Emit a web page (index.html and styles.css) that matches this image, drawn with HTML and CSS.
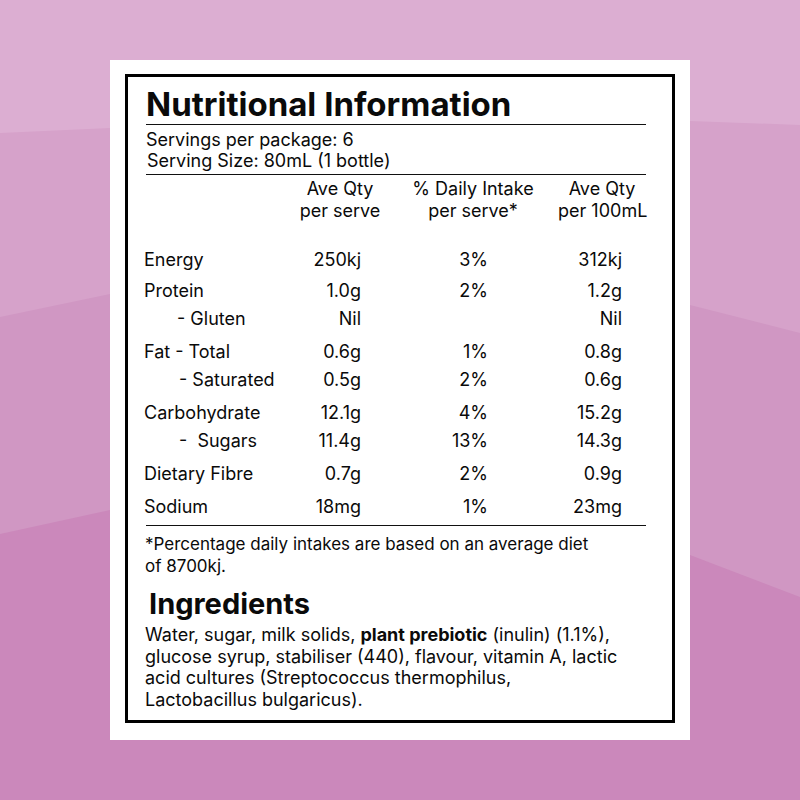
FILE: index.html
```html
<!DOCTYPE html>
<html lang="en">
<head>
<meta charset="utf-8">
<title>Nutritional Information</title>
<link rel="stylesheet" href="styles.css">
</head>
<body>
<div class="page">
  <div class="card">
    <div class="panel">
      <h1 class="title">Nutritional Information</h1>
      <div class="servings">
        <div>Servings per package: 6</div>
        <div class="size">Serving Size: 80mL (1 bottle)</div>
      </div>
      <div class="table">
        <div class="row head">
          <div class="label"></div>
          <div class="hc">Ave Qty<br>per serve</div>
          <div class="hc">% Daily Intake<br>per serve*</div>
          <div class="hc">Ave Qty<br>per 100mL</div>
        </div>
        <div class="row first">
          <div class="label">Energy</div>
          <div class="v1">250kj</div>
          <div class="v2">3%</div>
          <div class="v3">312kj</div>
        </div>
        <div class="row tight">
          <div class="label">Protein</div>
          <div class="v1">1.0g</div>
          <div class="v2">2%</div>
          <div class="v3">1.2g</div>
        </div>
        <div class="row">
          <div class="label sub">- Gluten</div>
          <div class="v1">Nil</div>
          <div class="v2"></div>
          <div class="v3">Nil</div>
        </div>
        <div class="row group">
          <div class="label">Fat - Total</div>
          <div class="v1">0.6g</div>
          <div class="v2">1%</div>
          <div class="v3">0.8g</div>
        </div>
        <div class="row">
          <div class="label sub sat">- Saturated</div>
          <div class="v1">0.5g</div>
          <div class="v2">2%</div>
          <div class="v3">0.6g</div>
        </div>
        <div class="row group">
          <div class="label">Carbohydrate</div>
          <div class="v1">12.1g</div>
          <div class="v2">4%</div>
          <div class="v3">15.2g</div>
        </div>
        <div class="row">
          <div class="label sub sat">-&nbsp; Sugars</div>
          <div class="v1">11.4g</div>
          <div class="v2">13%</div>
          <div class="v3">14.3g</div>
        </div>
        <div class="row group">
          <div class="label">Dietary Fibre</div>
          <div class="v1">0.7g</div>
          <div class="v2">2%</div>
          <div class="v3">0.9g</div>
        </div>
        <div class="row group last">
          <div class="label">Sodium</div>
          <div class="v1">18mg</div>
          <div class="v2">1%</div>
          <div class="v3">23mg</div>
        </div>
      </div>
      <p class="note">*Percentage daily intakes are based on an average diet<br>of 8700kj.</p>
      <h2 class="ing-title">Ingredients</h2>
      <p class="ing">Water, sugar, milk solids, <b>plant prebiotic</b> (inulin) (1.1%),<br>glucose syrup, stabiliser (440), flavour, vitamin A, lactic<br>acid cultures (Streptococcus thermophilus,<br>Lactobacillus bulgaricus).</p>
    </div>
  </div>
</div>
</body>
</html>
```

FILE: styles.css
```css
* { box-sizing: border-box; }

html, body {
  margin: 0;
  padding: 0;
}

body {
  width: 800px;
  height: 800px;
  font-family: "Inter", "Noto Sans", sans-serif;
  color: #0a0a0a;
  background-color: #dcaed2;
  background-image: url("data:image/svg+xml,%3Csvg xmlns='http://www.w3.org/2000/svg' width='800' height='800' viewBox='0 0 800 800'%3E%3Crect width='800' height='800' fill='%23dcaed2'/%3E%3Cpath d='M0 133 L110 128 L690 121 L800 125 L800 800 L0 800Z' fill='%23d6a2ca'/%3E%3Cpath d='M0 317 L110 294 L400 290 L690 305 L800 333 L800 800 L0 800Z' fill='%23d097c3'/%3E%3Cpath d='M0 534 L110 510 L400 525 L690 555 L800 597 L800 800 L0 800Z' fill='%23cb88bb'/%3E%3C/svg%3E");
  background-repeat: no-repeat;
  overflow: hidden;
}

.page {
  width: 800px;
  height: 800px;
  padding: 60px 110px;
}

.card {
  width: 580px;
  height: 680px;
  background: #ffffff;
  padding: 14px 15px 17px 15px;
  display: flex;
}

.panel {
  flex: 1;
  border: 3px solid #000;
  padding: 8px 26px 0 18px;
  display: flex;
  flex-direction: column;
}

.title {
  margin: 0;
  font-size: 33px;
  line-height: 38px;
  font-weight: 700;
  padding-bottom: 1px;
  border-bottom: 1px solid #111;
  white-space: nowrap;
}

.servings {
  font-size: 18px;
  line-height: 21px;
  padding: 4px 0 3px 0;
  border-bottom: 1px solid #111;
  white-space: nowrap;
}

.servings .size {
  padding-left: 1px;
}

.table {
  display: flex;
  flex-direction: column;
}

.row {
  display: grid;
  grid-template-columns: 146px 96px 170px 88px;
  font-size: 18px;
  line-height: 28px;
  white-space: nowrap;
}

.row.head {
  line-height: 22px;
  padding-top: 3px;
}

.row.first { margin-top: 24px; }
.row.tight { margin-top: 3px; }
.row.group { margin-top: 5px; }
.row.last {
  padding-bottom: 4px;
  border-bottom: 1px solid #111;
}

.label {
  margin-left: -2px;
}

.label.sub {
  padding-left: 33px;
}

.label.sat {
  padding-left: 35px;
}

.hc {
  text-align: center;
}

.v1 { text-align: right; padding-right: 27px; }
.v2 { text-align: right; padding-right: 70px; }
.v3 { text-align: right; padding-right: 24px; }

.note {
  margin: 0;
  padding-top: 7px;
  font-size: 17px;
  line-height: 22px;
  margin-left: -1px;
  white-space: nowrap;
}

.ing-title {
  margin: 11px 0 0 3px;
  font-size: 29px;
  line-height: 32px;
  font-weight: 700;
}

.ing {
  margin: 4px 0 0 -1px;
  font-size: 18px;
  line-height: 21.5px;
  white-space: nowrap;
}

.ing b {
  font-weight: 700;
}
```
